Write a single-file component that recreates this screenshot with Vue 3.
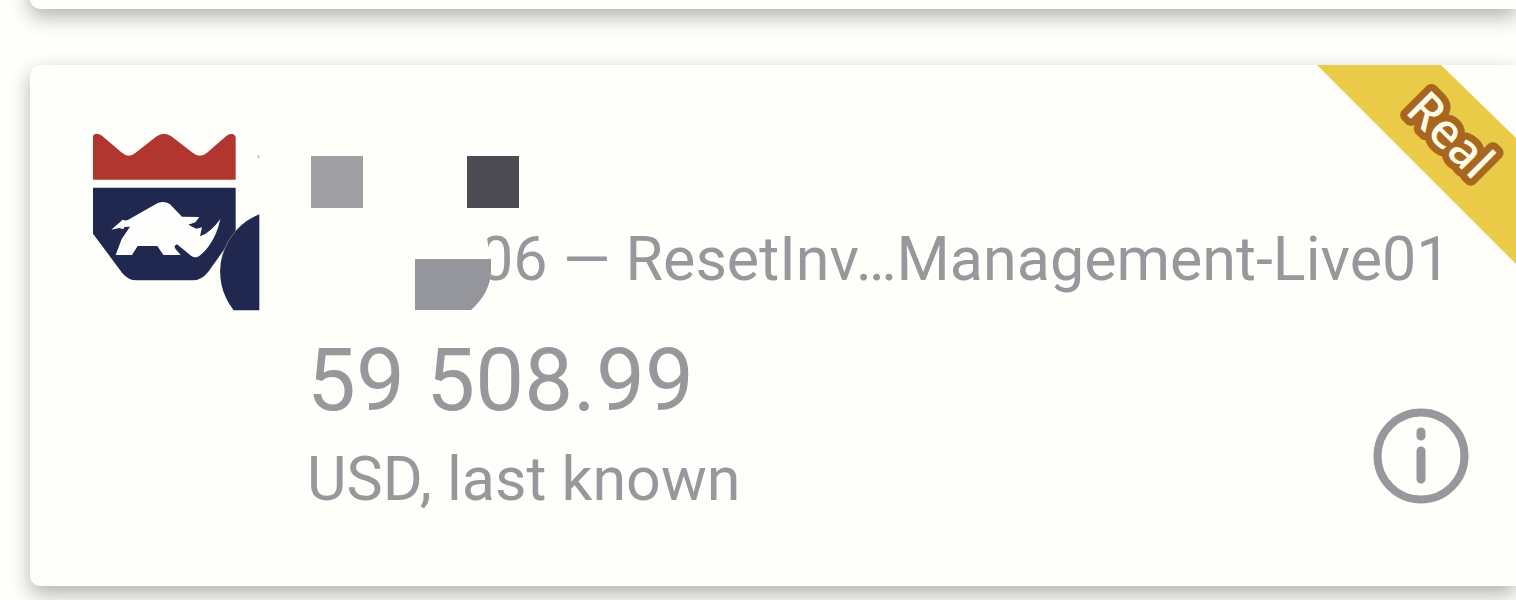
<script setup>
const account = {
  badge: 'Real',
  server: '06 — ResetInv…Management-Live01',
  balance: '59 508.99',
  note: 'USD, last known',
}
</script>

<template>
  <main class="page">
    <div class="card card-previous"></div>
    <article class="card account">
      <svg class="logo" viewBox="36 36 504 540" aria-hidden="true">
        <path fill="#b23630" d="M39 179V50Q40 40 52 41Q60 42 66 47L124 97Q145 116 166 99L230 49Q252 34 274 49L338 98Q360 116 381 98L438 49Q447 40 458 42Q466 44 467 52V179Z" />
        <path fill="#20284f" d="M39 203H467V340L385 455Q364 481 338 481H170Q145 481 126 458L39 341Z" />
        <path fill="#fefefc" d="M94 329L128 299Q140 305 150 296L232 250Q252 241 270 253L306 290L358 291L346 307L325 314L349 326L366 322L360 349Q392 338 421 297Q411 345 386 379Q369 402 354 410Q344 415 334 408L291 373Q280 376 286 386L302 405H250L232 378H173L156 405H107L125 357L150 320L133 321L130 328L118 324Z" />
        <path fill="#20284f" d="M538 283A185 185 0 0 0 461 571H538Z" />
        <path fill="none" stroke="#8a8ea5" stroke-width="2" d="M467 333A185 185 0 0 0 425 415" />
        <path fill="#b5b5b8" d="M532 109L538 105V118Z" />
      </svg>

      <div class="details">
        <div class="name">
          <span class="block light"></span>
          <span class="block dark"></span>
        </div>
        <div class="server">
          <span>{{ account.server }}</span>
          <svg class="cover" viewBox="0 0 190 90" aria-hidden="true">
            <path fill="#fefefb" d="M160 0H179V14Q181 27 183 35V49L179 64L160 90Z" />
            <path fill="#94969b" d="M107 35H183V48Q182 69 163 86H107Z" />
          </svg>
        </div>
        <div class="summary">
          <div>
            <div class="balance">{{ account.balance }}</div>
            <div class="note">{{ account.note }}</div>
          </div>
          <button class="info" type="button" aria-label="Account information">
            <svg viewBox="0 0 96 96" fill="none" stroke="#97979c" stroke-linecap="round" aria-hidden="true">
              <circle cx="48" cy="48" r="43.5" stroke-width="8" />
              <path stroke-width="9" d="M48 24v4M48 43v28" />
            </svg>
          </button>
        </div>
      </div>

      <svg class="ribbon" viewBox="0 0 200 200">
        <path fill="#eacb47" d="M1 0H125L200 73V199Z" />
        <text x="0" y="0" transform="translate(88 47) rotate(45)">{{ account.badge }}</text>
      </svg>
    </article>
  </main>
</template>

<style>
body {
  background: #fefefb;
}
</style>

<style scoped>
.page {
  display: flex;
  flex-direction: column;
  gap: 56px;
  padding: 0 0 14px 30px;
  overflow: hidden;
  background: #fefefb;
  color: #97979c;
  font-family: Roboto, "Liberation Sans", sans-serif;
}

.card {
  position: relative;
  background: #fefefb;
  border-radius: 10px 0 0 10px;
  box-shadow: 0 8px 20px rgba(0, 0, 0, 0.3);
}

.card-previous {
  height: 69px;
  margin-top: -60px;
}

.account {
  display: flex;
  gap: 47px;
  padding: 67px 47px 72px 62px;
}

.logo {
  flex: none;
  width: 168px;
  height: 180px;
}

.details {
  flex: 1;
  min-width: 0;
  padding-top: 24px;
}

.name {
  display: flex;
  gap: 104px;
  padding-left: 4px;
}

.block {
  width: 52px;
  height: 52px;
}

.light {
  background: #a09fa4;
}

.dark {
  background: #4c4b51;
}

.server {
  position: relative;
  margin-top: 16px;
  padding-left: 172px;
  font-size: 61px;
  line-height: 70px;
  white-space: nowrap;
}

.cover {
  position: absolute;
  top: 0;
  left: 1px;
  width: 190px;
  height: 90px;
}

.summary {
  display: flex;
  justify-content: space-between;
  align-items: flex-end;
  margin-top: 36px;
}

.balance {
  font-size: 87px;
  line-height: 100px;
}

.note {
  margin-top: 14px;
  font-size: 61px;
  line-height: 70px;
}

.info {
  width: 96px;
  height: 96px;
  margin: 0 0 10px;
  padding: 0;
  border: 0;
  background: none;
  cursor: pointer;
}

.info svg {
  display: block;
  width: 100%;
  height: 100%;
}

.ribbon {
  position: absolute;
  top: 0;
  right: 0;
  width: 200px;
  height: 200px;
}

.ribbon text {
  font-family: "Noto Sans", "Open Sans", sans-serif;
  font-size: 48px;
  font-weight: 500;
  fill: #fffbe9;
  stroke: #a8661f;
  stroke-width: 14px;
  stroke-linejoin: round;
  paint-order: stroke;
}
</style>
